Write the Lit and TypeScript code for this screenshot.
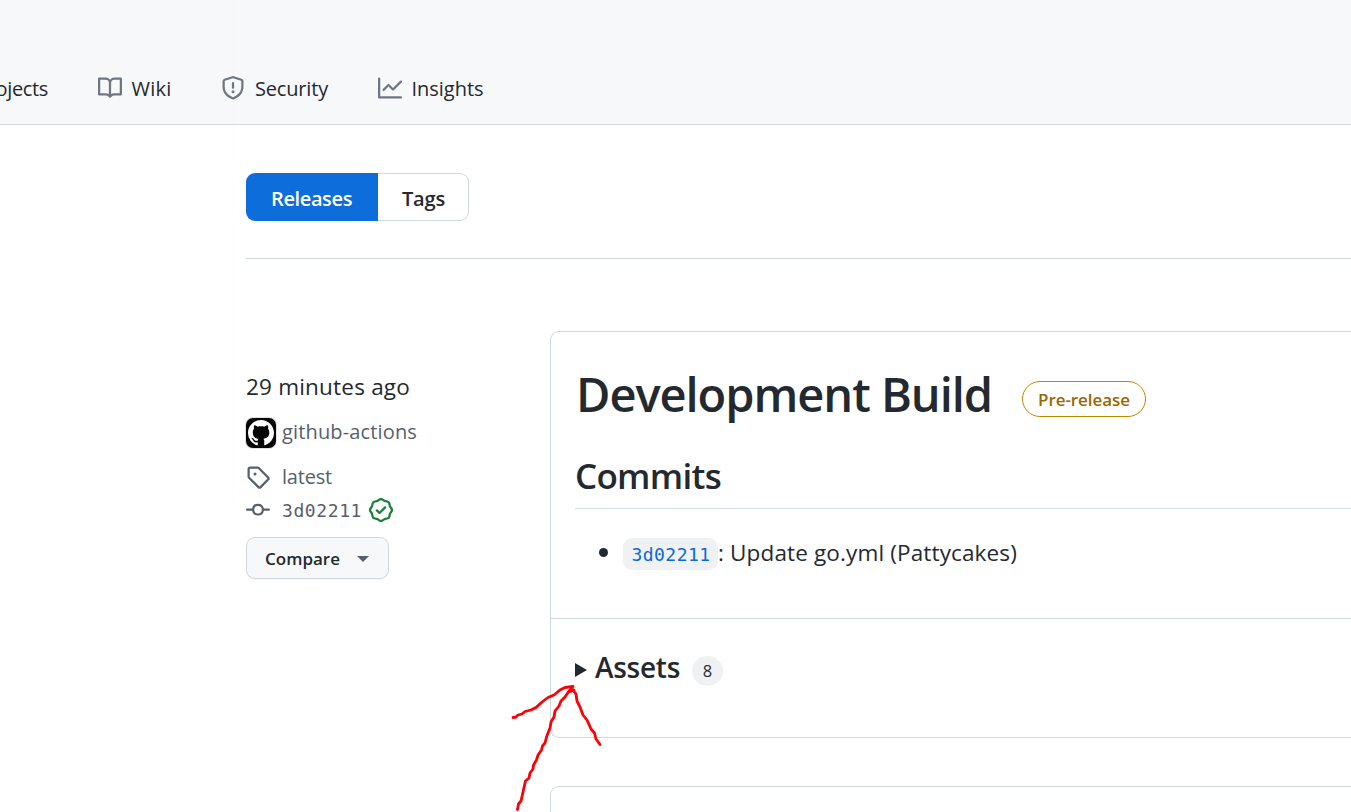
import { LitElement, html, css, svg } from "lit";
import { customElement } from "lit/decorators.js";

const ICONS = {
  book: "M0 1.75A.75.75 0 0 1 .75 1h4.253c1.227 0 2.317.59 3 1.501A3.743 3.743 0 0 1 11.006 1h4.245a.75.75 0 0 1 .75.75v10.5a.75.75 0 0 1-.75.75h-4.507a2.25 2.25 0 0 0-1.591.659l-.622.621a.75.75 0 0 1-1.06 0l-.622-.621A2.25 2.25 0 0 0 5.258 13H.75a.75.75 0 0 1-.75-.75Zm7.251 10.324.004-5.073-.002-2.253A2.25 2.25 0 0 0 5.003 2.5H1.5v9h3.757a3.75 3.75 0 0 1 1.994.574ZM8.755 4.75l-.004 7.322a3.752 3.752 0 0 1 1.992-.572H14.5v-9h-3.495a2.25 2.25 0 0 0-2.25 2.25Z",
  shield: "M7.467.133a1.748 1.748 0 0 1 1.066 0l5.25 1.68A1.75 1.75 0 0 1 15 3.48V7c0 1.566-.32 3.182-1.303 4.682-.983 1.498-2.585 2.813-5.032 3.855a1.697 1.697 0 0 1-1.33 0c-2.447-1.042-4.049-2.357-5.032-3.855C1.32 10.182 1 8.566 1 7V3.48a1.75 1.75 0 0 1 1.217-1.667Zm.61 1.429a.25.25 0 0 0-.153 0l-5.25 1.68a.25.25 0 0 0-.174.238V7c0 1.358.275 2.666 1.057 3.86.784 1.194 2.121 2.34 4.366 3.297a.196.196 0 0 0 .154 0c2.245-.956 3.582-2.104 4.366-3.298C13.225 9.666 13.5 8.36 13.5 7V3.48a.251.251 0 0 0-.174-.237l-5.25-1.68ZM8.75 4.75v3a.75.75 0 0 1-1.5 0v-3a.75.75 0 0 1 1.5 0ZM9 10.5a1 1 0 1 1-2 0 1 1 0 0 1 2 0Z",
  graph: "M1.5 1.75V13.5h13.75a.75.75 0 0 1 0 1.5H.75a.75.75 0 0 1-.75-.75V1.75a.75.75 0 0 1 1.5 0Zm14.28 2.53-5.25 5.25a.75.75 0 0 1-1.06 0L7 7.06 4.28 9.78a.751.751 0 0 1-1.042-.018.751.751 0 0 1-.018-1.042l3.25-3.25a.75.75 0 0 1 1.06 0L10 7.94l4.72-4.72a.751.751 0 0 1 1.042.018.751.751 0 0 1 .018 1.042Z",
  tag: "M1 7.775V2.75C1 1.784 1.784 1 2.75 1h5.025c.464 0 .91.184 1.238.513l6.25 6.25a1.75 1.75 0 0 1 0 2.474l-5.026 5.026a1.75 1.75 0 0 1-2.474 0l-6.25-6.25A1.752 1.752 0 0 1 1 7.775Zm1.5 0c0 .066.026.13.073.177l6.25 6.25a.25.25 0 0 0 .354 0l5.025-5.025a.25.25 0 0 0 0-.354l-6.25-6.25a.25.25 0 0 0-.177-.073H2.75a.25.25 0 0 0-.25.25ZM6 5a1 1 0 1 1 0 2 1 1 0 0 1 0-2Z",
  commit: "M11.93 8.5a4.002 4.002 0 0 1-7.86 0H.75a.75.75 0 0 1 0-1.5h3.32a4.002 4.002 0 0 1 7.86 0h3.32a.75.75 0 0 1 0 1.5Zm-1.43-.75a2.5 2.5 0 1 0-5 0 2.5 2.5 0 0 0 5 0Z",
  verified: "m9.585.52.929.68c.153.112.331.186.518.215l1.138.175a2.678 2.678 0 0 1 2.24 2.24l.174 1.139c.029.187.103.365.215.518l.68.928a2.677 2.677 0 0 1 0 3.17l-.68.928a1.174 1.174 0 0 0-.215.518l-.175 1.138a2.678 2.678 0 0 1-2.241 2.241l-1.138.175a1.17 1.17 0 0 0-.518.215l-.928.68a2.677 2.677 0 0 1-3.17 0l-.928-.68a1.174 1.174 0 0 0-.518-.215L3.83 14.41a2.678 2.678 0 0 1-2.24-2.24l-.175-1.138a1.17 1.17 0 0 0-.215-.518l-.68-.928a2.677 2.677 0 0 1 0-3.17l.68-.928c.112-.153.186-.331.215-.518l.175-1.14a2.678 2.678 0 0 1 2.24-2.24l1.139-.175c.187-.029.365-.103.518-.215l.928-.68a2.677 2.677 0 0 1 3.17 0ZM7.303 1.728l-.927.68a2.67 2.67 0 0 1-1.18.489l-1.137.174a1.179 1.179 0 0 0-.987.987l-.174 1.136a2.677 2.677 0 0 1-.489 1.18l-.68.928a1.18 1.18 0 0 0 0 1.394l.68.927c.256.348.424.753.489 1.18l.174 1.137c.078.509.478.909.987.987l1.136.174a2.67 2.67 0 0 1 1.18.489l.928.68c.414.305.979.305 1.394 0l.927-.68a2.67 2.67 0 0 1 1.18-.489l1.137-.174a1.18 1.18 0 0 0 .987-.987l.174-1.136a2.67 2.67 0 0 1 .489-1.18l.68-.928a1.176 1.176 0 0 0 0-1.394l-.68-.927a2.686 2.686 0 0 1-.489-1.18l-.174-1.137a1.179 1.179 0 0 0-.987-.987l-1.136-.174a2.677 2.677 0 0 1-1.18-.489l-.928-.68a1.176 1.176 0 0 0-1.394 0ZM11.28 6.78l-3.75 3.75a.75.75 0 0 1-1.06 0L4.72 8.78a.751.751 0 0 1 .018-1.042.751.751 0 0 1 1.042-.018L7 8.94l3.22-3.22a.751.751 0 0 1 1.042.018.751.751 0 0 1 .018 1.042Z",
  github: "M8 0c4.42 0 8 3.58 8 8a8.013 8.013 0 0 1-5.45 7.59c-.4.08-.55-.17-.55-.38 0-.27.01-1.13.01-2.2 0-.75-.25-1.23-.54-1.48 1.78-.2 3.65-.88 3.65-3.95 0-.88-.31-1.59-.82-2.15.08-.2.36-1.02-.08-2.12 0 0-.67-.22-2.2.82-.64-.18-1.32-.27-2-.27-.68 0-1.36.09-2 .27-1.53-1.03-2.2-.82-2.2-.82-.44 1.1-.16 1.92-.08 2.12-.51.56-.82 1.28-.82 2.15 0 3.06 1.86 3.75 3.64 3.95-.23.2-.44.55-.51 1.07-.46.21-1.61.55-2.33-.66-.15-.24-.6-.83-1.23-.82-.67.01-.27.38.01.53.34.19.73.9.82 1.13.16.45.68 1.31 2.69.94 0 .67.01 1.3.01 1.49 0 .21-.15.45-.55.38A7.995 7.995 0 0 1 0 8c0-4.42 3.58-8 8-8Z",
};

const icon = (name: keyof typeof ICONS, size = 24) => html`
  <svg class="icon" width=${size} height=${size} viewBox="0 0 16 16" fill="currentColor" aria-hidden="true">
    ${svg`<path d=${ICONS[name]}></path>`}
  </svg>`;

// A run of text set to a given advance width; tracking is worked out after the first render.
const run = (text: string, width: number) => html`<span class="run" data-w=${width}>${text}</span>`;

const MENU_GROUPS: [string, number][][] = [
  [["Features", 79], ["Mobile", 64], ["Actions", 66], ["Codespaces", 108], ["Packages", 81], ["Security", 73], ["Code review", 112], ["Issues", 54], ["Integrations", 109]],
  [["GitHub Sponsors", 158], ["Customer stories", 157]],
];

@customElement("app-root")
export class AppRoot extends LitElement {
  static styles = css`
    :host {
      display: block;
      position: relative;
      width: 100%;
      height: 812px;
      overflow: hidden;
      background: #fff;
      color: #24292f;
      font-family: "Open Sans", "Noto Sans", sans-serif;
      font-size: 20px;
    }
    * { box-sizing: border-box; }
    .run { display: inline-block; white-space: pre; }
    .icon { display: block; flex: none; }
    .mono { font-family: "DejaVu Sans Mono", "Liberation Mono", monospace; font-size: 18px; }

    header {
      height: 125px;
      padding-top: 76px;
      background: #f6f8fa;
      border-bottom: 1px solid #d0d7de;
    }
    nav { display: flex; gap: 49.500px; margin-left: -24px; height: 24px; }
    .tab { display: flex; gap: 10px; align-items: center; line-height: 24px; }
    .tab .run { padding-top: 2px; }
    .tab .icon { color: #6e7781; }

    main { padding: 48px 0 0 246px; }
    .segmented {
      display: flex;
      width: 223px;
      height: 48px;
      font-weight: 560;
      line-height: 52px;
    }
    .seg-on {
      width: 132px;
      padding-left: 25px;
      background: #0d6ddb;
      color: #fff;
      border-radius: 9px 0 0 9px;
    }
    .seg-off {
      flex: 1;
      padding-left: 24px;
      line-height: 50px;
      border: 1px solid #d0d7de;
      border-left: 0;
      border-radius: 0 9px 9px 0;
    }
    .rule { height: 1px; margin-top: 37px; background: #d0d7de; }
    .release { display: grid; grid-template-columns: 304px 1fr; margin-top: 72px; }

    .meta { padding-top: 39px; color: #57606a; }
    .when { height: 32px; line-height: 34px; font-size: 22.5px; color: #24292f; }
    .row { display: flex; align-items: center; gap: 12px; height: 30px; line-height: 27px; }
    .row > .run { padding-bottom: 2px; }
    .author { margin-top: 16px; gap: 6px; line-height: 28px; }
    .avatar {
      display: grid;
      place-items: center;
      width: 30px;
      height: 30px;
      border-radius: 7px;
      background: #060606;
      color: #fff;
      box-shadow: 0 0 0 1px #dfe1e4;
    }
    .tagrow { margin-top: 14px; }
    .hashrow { margin-top: 3px; }
    .hashrow .mono { padding-top: 1px; }
    .hashrow .verified { color: #1a7f37; margin-left: -5px; }
    .compare {
      display: flex;
      align-items: center;
      width: 143px;
      height: 42px;
      margin-top: 12px;
      padding: 0 18px;
      gap: 17px;
      border: 1px solid #d3d6d9;
      border-radius: 9px;
      background: #f6f8fa;
      box-shadow: 0 1px 0 rgba(27, 31, 36, 0.04);
      color: #24292f;
      font-size: 17px;
      font-weight: 560;
    }
    .caret { margin-top: 2px; border: 6px solid transparent; border-top-color: #57606a; border-bottom: 0; }

    .card { border: 1px solid #d0d7de; border-right: 0; border-radius: 9px 0 0 9px; height: 407px; }
    .body { height: 287px; padding: 30px 0 0 24px; border-bottom: 1px solid #d0d7de; }
    .titlebar { display: flex; align-items: center; height: 64px; gap: 30px; }
    h1 { margin: 0; padding-left: 1px; font-size: 47px; line-height: 64px; font-weight: 540; }
    .badge {
      width: 124px;
      height: 36px;
      margin-top: 9px;
      border: 1px solid #bf8700;
      border-radius: 18px;
      color: #9a6700;
      font-size: 17px;
      line-height: 35px;
      font-weight: 560;
      text-align: center;
    }
    h2 {
      margin: 0;
      height: 83px;
      padding-top: 26px;
      font-size: 35px;
      line-height: 48px;
      font-weight: 540;
      border-bottom: 1px solid #d8dee4;
    }
    .commits { margin: 29px 0 0; padding: 0; list-style: none; }
    .commits li { display: flex; align-items: center; height: 32px; font-size: 22.5px; line-height: 30px; padding-left: 24px; }
    .commits li > .run { padding-bottom: 2px; }
    .dot { width: 9px; height: 9px; margin: -3px 15px 0 0; border-radius: 50%; background: #24292f; }
    .code {
      width: 95px;
      height: 32px;
      line-height: 34px;
      padding-left: 1px;
      text-align: center;
      border-radius: 9px;
      background: #eff1f3;
      color: #0969da;
    }
    .assets { display: flex; align-items: center; height: 40px; margin: 30px 0 0 24px; }
    .tri { border: 7px solid transparent; border-left: 12px solid #24292f; border-right: 0; margin-top: 2px; }
    h3 { margin: -4px 0 0 8px; font-size: 28px; line-height: 36px; font-weight: 560; }
    .count {
      width: 31px;
      height: 30px;
      margin: 4px 0 0 12px;
      border-radius: 15px;
      background: #eff1f3;
      font-size: 16.5px;
      line-height: 29px;
      text-align: center;
    }
    .next { margin: 48px 0 0 304px; }

    .ghost {
      position: absolute;
      left: 233px;
      top: -23px;
      padding-left: 37px;
      border-left: 1px solid rgba(0, 0, 0, 0.006);
      color: rgba(0, 0, 0, 0.018);
      pointer-events: none;
    }
    .ghost div { height: 44.1px; line-height: 40px; }
    .ghost section + section { margin-top: 48px; }
    .pen { position: absolute; left: 0; top: 0; pointer-events: none; }
  `;

  firstUpdated() {
    const runs = Array.from(this.renderRoot.querySelectorAll<HTMLElement>("[data-w]"));
    for (const el of runs) {
      const target = Number(el.dataset.w);
      const natural = el.getBoundingClientRect().width;
      el.style.letterSpacing = `${(target - natural) / (el.textContent ?? " ").length}px`;
    }
  }

  render() {
    return html`
      <header>
        <nav>
          <div class="tab">${run("Projects", 72)}</div>
          <div class="tab">${icon("book")}${run("Wiki", 40)}</div>
          <div class="tab">${icon("shield")}${run("Security", 73)}</div>
          <div class="tab">${icon("graph")}${run("Insights", 72)}</div>
        </nav>
      </header>
      <main>
        <div class="segmented">
          <div class="seg-on">${run("Releases", 81)}</div>
          <div class="seg-off">${run("Tags", 43)}</div>
        </div>
        <div class="rule"></div>
        <div class="release">
          <aside class="meta">
            <div class="when">${run("29 minutes ago", 164)}</div>
            <div class="row author"><span class="avatar">${icon("github", 26)}</span>${run("github-actions", 135)}</div>
            <div class="row tagrow">${icon("tag")}${run("latest", 50)}</div>
            <div class="row hashrow">${icon("commit")}<span class="mono">${run("3d02211", 80)}</span><span class="verified">${icon("verified")}</span></div>
            <div class="compare">${run("Compare", 75)}<span class="caret"></span></div>
          </aside>
          <article class="card">
            <div class="body">
              <div class="titlebar">
                <h1>${run("Development Build", 416)}</h1>
                <span class="badge">${run("Pre-release", 92)}</span>
              </div>
              <h2>${run("Commits", 146)}</h2>
              <ul class="commits">
                <li><span class="dot"></span><span class="code mono">${run("3d02211", 79)}</span>${run(": Update go.yml (Pattycakes)", 299)}</li>
              </ul>
            </div>
            <div class="assets">
              <span class="tri"></span>
              <h3>${run("Assets", 85)}</h3>
              <span class="count">8</span>
            </div>
          </article>
        </div>
        <div class="card next"></div>
      </main>
      <div class="ghost" aria-hidden="true">
        ${MENU_GROUPS.map((g) => html`<section>${g.map(([t, w]) => html`<div>${run(t, w)}</div>`)}</section>`)}
      </div>
      <svg class="pen" width="1351" height="812" fill="none" stroke="#fb0007" stroke-width="2.8" stroke-linecap="round" stroke-linejoin="round">
        <path d="M517.5 809.5L518.5 804L521 801L523 792L525.500 781L529 778L530 773L533 769L533.500 765L536.500 760L538 755L541.500 750L542.500 746L545 743L546.500 737L550 728L551 722L554 717L555 711L559 706L561 701L565 697L569 691L571 689L574 690L569 692"></path>
        <path d="M513 717.500L516 717L518 715L522 714L525 711.500L531 710L536 707.500L542 702L548 697.500L554 695L560 690L565 687.500L573 686.500"></path>
        <path d="M573 690L576 694L577 701L580 707L583 715L587 720L591 729L594.500 733L596 739L600 744.500"></path>
      </svg>
    `;
  }
}
